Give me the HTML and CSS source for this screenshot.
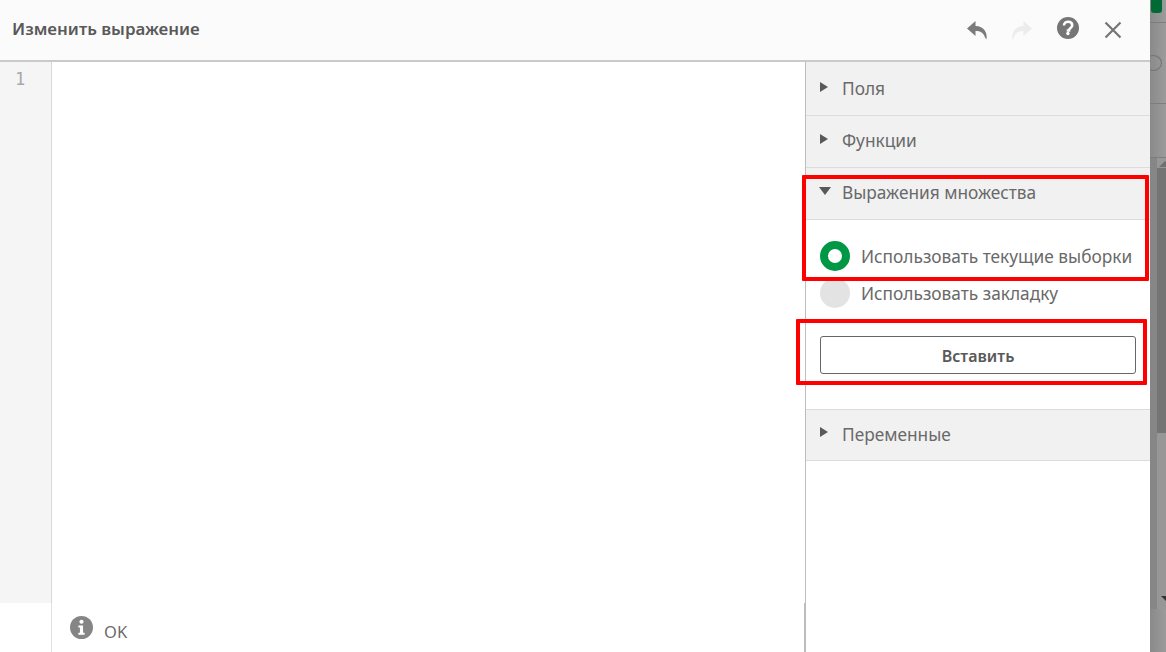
FILE: index.html
```html
<!DOCTYPE html>
<html lang="ru">
<head>
<meta charset="utf-8">
<title>Изменить выражение</title>
<link rel="stylesheet" href="styles.css">
</head>
<body>
<div class="page">
  <main class="dialog">
    <header class="head">
      <h1 class="title">Изменить выражение</h1>
      <div class="tools">
        <svg class="icon undo" viewBox="0 0 24 24"><path d="M10.500 3 2 10.500 10.500 18v-5c5 0 8 1.500 9.500 6.500l1.500 2c1.200-7-2.500-13.500-11-13.500z"/></svg>
        <svg class="icon redo" viewBox="0 0 24 24"><path d="M13.500 3 22 10.500 13.500 18v-5c-5 0-8 1.500-9.500 6.500l-1.500 2C1.300 14.500 5 8 13.500 8z"/></svg>
        <svg class="icon help" viewBox="0 0 24 24"><circle cx="12" cy="12" r="11"/><path class="help-q" d="M8 9.500C8 7 9.800 5.800 12.200 5.800s4 1.300 4 3.400c0 2.900-3.200 2.800-3.200 5.300h-2.300"/><circle class="help-dot" cx="11.900" cy="17.500" r="1.700"/></svg>
        <svg class="icon close" viewBox="0 0 24 24"><path d="M4.500 4.500l15 15M19.500 4.500l-15 15"/></svg>
      </div>
    </header>
    <div class="body">
      <section class="editor">
        <div class="code">
          <div class="gutter">1</div>
          <div class="text-area"></div>
        </div>
        <div class="status">
          <div class="status-pad"></div>
          <div class="status-msg">
            <svg class="info" viewBox="0 0 22 22"><circle cx="11" cy="11" r="11"/><circle class="info-mark" cx="11" cy="5.500" r="2"/><path class="info-mark" d="M8 9h4.500v7H14v2H8v-2h1.500v-5H8z"/></svg>
            <span class="ok">OK</span>
          </div>
        </div>
      </section>
      <aside class="panel">
        <div class="row row-first"><span class="tri"></span>Поля</div>
        <div class="row"><span class="tri"></span>Функции</div>
        <div class="row"><span class="tri open"></span>Выражения множества</div>
        <div class="set">
          <div class="radio-line first"><span class="radio on"></span>Использовать текущие выборки</div>
          <div class="radio-line"><span class="radio"></span>Использовать закладку</div>
          <button class="insert">Вставить</button>
        </div>
        <div class="row"><span class="tri"></span>Переменные</div>
      </aside>
    </div>
  </main>
  <div class="backdrop">
    <div class="bd-top"><span class="bd-green"></span></div>
    <div class="bd-mid"><span class="bd-circle"></span></div>
    <div class="bd-scroll">
      <div class="sb-edge"></div>
      <div class="sb">
        <span class="sb-up"></span>
        <span class="sb-thumb"></span>
        <span class="sb-down"></span>
      </div>
    </div>
    <div class="bd-bottom"></div>
  </div>
  <div class="mark mark-a"></div>
  <div class="mark mark-b"></div>
</div>
</body>
</html>
```
FILE: styles.css
```css
* { box-sizing: border-box; }
html, body { margin: 0; height: 100%; overflow: hidden; }
body { font-family: "Noto Sans", "Open Sans", sans-serif; color: #595959; background: #fff; }
.page { position: relative; display: flex; width: 1166px; height: 652px; }
.dialog { width: 1150px; display: flex; flex-direction: column; background: #fff; }
.head { height: 62px; flex: none; display: flex; align-items: center; justify-content: space-between; padding: 0 25px 4px 12px; background: #fbfbfb; border-bottom: 2px solid #cacaca; }
.title { margin: 0; font-size: 16.900px; font-weight: 600; color: #595959; }
.tools { display: flex; align-items: center; }
.icon { width: 24px; height: 24px; display: block; }
.undo { fill: #7b7b7b; margin-right: 21px; margin-top: 4px; }
.redo { fill: #ececec; margin-right: 22px; margin-top: 4px; }
.help { fill: #757575; margin-right: 21px; }
.help-q { fill: none; stroke: #fff; stroke-width: 2.600; }
.help-dot { fill: #fff; }
.close { fill: none; stroke: #757575; stroke-width: 2.200; margin-top: 4px; }
.body { flex: 1; display: flex; min-height: 0; }
.editor { flex: none; width: 805px; display: flex; flex-direction: column; }
.code { flex: none; height: 541px; display: flex; }
.gutter { width: 52px; background: #f5f5f5; border-right: 1px solid #d9d9d9; font-family: "DejaVu Sans Mono", monospace; font-size: 17px; color: #a8a8a8; padding: 6px 0 0 15px; line-height: 22px; }
.text-area { flex: 1; background: #fff; }
.status { flex: 1; display: flex; border-right: 2px solid #bdbdbd; margin-right: -1px; }
.status-pad { width: 52px; border-right: 1px solid #e2e2e2; }
.status-msg { flex: 1; display: flex; align-items: flex-start; padding: 13px 0 0 18px; }
.info { width: 23px; height: 23px; fill: #858585; flex: none; }
.info-mark { fill: #fff; }
.ok { margin-left: 11px; margin-top: 5px; font-size: 16.500px; line-height: 22px; color: #6b6b6b; }
.panel { flex: 1; border-left: 1px solid #bdbdbd; background: #fff; min-width: 0; }
.row { height: 52px; display: flex; align-items: center; padding: 0 0 2px 14px; background: #f1f1f1; border-bottom: 1px solid #dcdcdc; font-size: 17.300px; color: #696969; }
.row-first { height: 54px; padding-top: 2px; }
.row:last-child { border-top: 1px solid #dcdcdc; }
.tri { width: 0; height: 0; margin-right: 14px; margin-top: -4px; border-left: 8px solid #595959; border-top: 5px solid transparent; border-bottom: 5px solid transparent; }
.tri.open { margin-left: -1px; margin-right: 11px; border-top: 8px solid #595959; border-left: 6px solid transparent; border-right: 6px solid transparent; border-bottom: 0; }
.set { height: 189px; padding: 18px 14px 0 14px; }
.radio-line { display: flex; align-items: center; height: 36px; font-size: 17.300px; color: #696969; white-space: nowrap; }
.radio-line.first { height: 36px; margin-bottom: 1px; }
.radio { width: 30px; height: 30px; border-radius: 50%; margin-right: 11px; background: #e3e3e3; flex: none; }
.radio.on { background: #fff; border: 8px solid #009845; }
.insert { display: block; width: 316px; height: 38px; margin-top: 25px; background: #fff; border: 1px solid #666; border-radius: 3px; font-family: inherit; font-size: 16px; font-weight: 600; color: #595959; padding: 1px 0 0; }
.backdrop { flex: 1; display: flex; flex-direction: column; background: linear-gradient(90deg, #8a8a8a, #9b9b9b); min-width: 0; }
.bd-top { height: 23px; flex: none; border-bottom: 1px solid #7d7d7d; }
.bd-green { display: block; width: 11px; height: 13px; margin-left: 1px; background: #006a35; border-radius: 0 0 3px 3px; }
.bd-mid { height: 81px; flex: none; border-bottom: 1px solid #7d7d7d; padding-top: 32px; overflow: hidden; }
.bd-circle { display: block; width: 18px; height: 16px; margin-left: -6px; border: 1px solid #737373; border-radius: 50%; }
.bd-scroll { flex: none; margin-top: 53px; height: 452px; display: flex; border-top: 1px solid #7d7d7d; }
.sb-edge { width: 7px; background: #868686; }
.sb { flex: 1; display: flex; flex-direction: column; background: #979797; overflow: hidden; }
.sb-up { margin: 3px 0 1px 2px; width: 0; height: 0; border-left: 6px solid transparent; border-right: 6px solid transparent; border-bottom: 6px solid #6f6f6f; }
.sb-thumb { display: block; height: 265px; background: #747474; flex: none; }
.sb-down { margin: auto 0 8px 4px; width: 0; height: 0; border-left: 5px solid transparent; border-right: 5px solid transparent; border-top: 5px solid #333; }
.bd-bottom { flex: 1; }
.mark { position: absolute; border: 4px solid #ff0000; border-radius: 1px; pointer-events: none; }
.mark-a { left: 802px; top: 175px; width: 347px; height: 106px; }
.mark-b { left: 796px; top: 319px; width: 351px; height: 66px; }
```
